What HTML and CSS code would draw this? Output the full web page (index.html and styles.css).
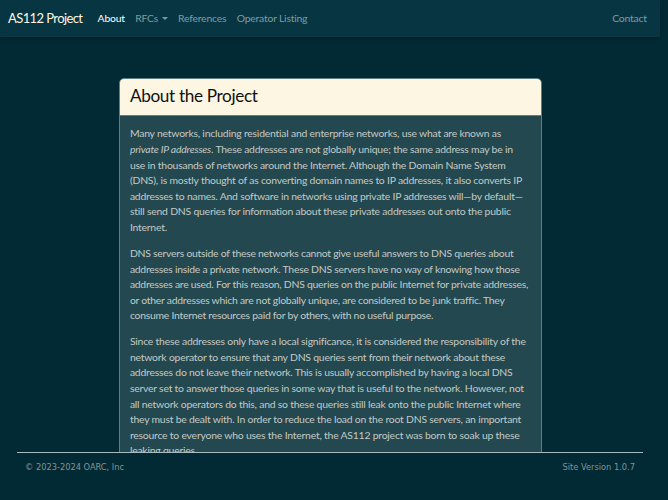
FILE: index.html
```html
<!DOCTYPE html>
<html lang="en">
<head>
<meta charset="utf-8">
<title>AS112 Project</title>
<link rel="stylesheet" href="styles.css">
</head>
<body>
<div class="page">
  <nav class="navbar">
    <a class="brand" href="#">AS112 Project</a>
    <ul class="nav">
      <li><a class="nav-link active" href="#">About</a></li>
      <li><a class="nav-link" href="#">RFCs <span class="caret"></span></a></li>
      <li><a class="nav-link" href="#">References</a></li>
      <li><a class="nav-link" href="#">Operator Listing</a></li>
    </ul>
    <ul class="nav nav-right">
      <li><a class="nav-link" href="#">Contact</a></li>
    </ul>
  </nav>
  <main class="main">
    <div class="card">
      <div class="card-header"><h3>About the Project</h3></div>
      <div class="card-body">
        <p>Many networks, including residential and enterprise networks, use what are known as <em>private IP addresses</em>. These addresses are not globally unique; the same address may be in use in thousands of networks around the Internet. Although the Domain Name System (DNS), is mostly thought of as converting domain names to IP addresses, it also converts IP addresses to names. And software in networks using private IP addresses will—by default—still send DNS queries for information about these private addresses out onto the public Internet.</p>
        <p class="tight">DNS servers outside of these networks cannot give useful answers to DNS queries about addresses inside a private network. These DNS servers have no way of knowing how those addresses are used. For this reason, DNS queries on the public Internet for private addresses, or other addresses which are not globally unique, are considered to be junk traffic. They consume Internet resources paid for by others, with no useful purpose.</p>
        <p>Since these addresses only have a local significance, it is considered the responsibility of the network operator to ensure that any DNS queries sent from their network about these addresses do not leave their network. This is usually accomplished by having a local DNS server set to answer those queries in some way that is useful to the network. However, not all network operators do this, and so these queries still leak onto the public Internet where they must be dealt with. In order to reduce the load on the root DNS servers, an important resource to everyone who uses the Internet, the AS112 project was born to soak up these leaking queries.</p>
      </div>
    </div>
  </main>
  <footer class="footer">
    <div class="footer-inner">
      <span>© 2023-2024 OARC, Inc</span>
      <span>Site Version 1.0.7</span>
    </div>
  </footer>
</div>
</body>
</html>
```
FILE: styles.css
```css
* { box-sizing: border-box; }
html, body { margin: 0; padding: 0; height: 100%; }
body {
  background: #022a35;
  font-family: Lato, "Open Sans", sans-serif;
  font-size: 10.4px;
  line-height: 15.6px;
  color: #c3cac6;
  overflow: hidden;
}
.page {
  width: 660px;
  height: 500px;
  display: flex;
  flex-direction: column;
}
.navbar {
  background: #073642;
  height: 37px;
  display: flex;
  align-items: center;
  padding: 0 8px;
  box-shadow: 0 1px 3px rgba(0,0,0,0.35);
  flex-shrink: 0;
  position: relative;
  z-index: 2;
  letter-spacing: -0.2px;
}
.brand {
  color: #fdf6e3;
  text-decoration: none;
  font-size: 13px;
  letter-spacing: -0.6px;
  margin-right: 10px;
}
.nav {
  list-style: none;
  margin: 0;
  padding: 0;
  display: flex;
}
.nav-right { margin-left: auto; }
.nav-link {
  display: block;
  padding: 3px 5.2px;
  color: #7f9ca2;
  text-decoration: none;
}
.nav-link.active { color: #ffffff; }
.caret {
  display: inline-block;
  width: 0; height: 0;
  border-left: 3px solid transparent;
  border-right: 3px solid transparent;
  border-top: 3px solid currentColor;
  vertical-align: 2px;
  margin-left: 1px;
}
.main {
  flex: 1;
  overflow: hidden;
  display: flex;
  justify-content: center;
  padding-top: 41px;
}
.card {
  width: 423px;
  background: #234850;
  border: 1px solid #5f7e84;
  border-radius: 5px;
  align-self: flex-start;
}
.card-header {
  background: #fdf6e3;
  border-radius: 4px 4px 0 0;
  padding: 7px 10.4px 9px;
  border-bottom: 1px solid #5f7e84;
}
.card-header h3 {
  margin: 0;
  font-weight: 400;
  font-size: 17.2px;
  line-height: 20px;
  letter-spacing: -0.35px;
  color: #111;
}
.card-body {
  padding: 10.4px 10.4px;
  letter-spacing: -0.21px;
}
.card-body p { margin: 0 0 10.4px; }
.card-body p.tight { letter-spacing: -0.25px; }
.footer {
  height: 48px;
  flex-shrink: 0;
  display: flex;
  justify-content: center;
  background: #022a35;
}
.footer-inner {
  width: 626px;
  border-top: 1px solid #a8bcc0;
  display: flex;
  justify-content: space-between;
  padding: 6px 8px 0;
  font-family: "DejaVu Sans Condensed", "Liberation Sans Narrow", sans-serif;
  font-stretch: condensed;
  color: #839496;
  font-size: 9.2px;
}
```
